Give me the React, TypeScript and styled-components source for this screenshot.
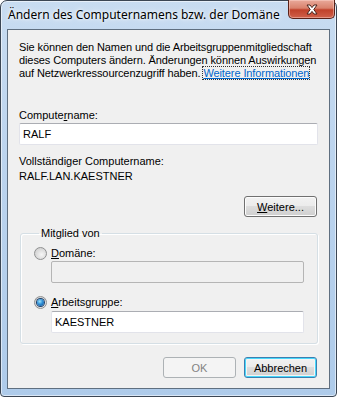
import React from 'react';
import styled, { createGlobalStyle } from 'styled-components';

const GlobalStyle = createGlobalStyle`
  html, body {
    margin: 0;
    padding: 0;
    background: #ffffff;
    overflow: hidden;
  }
  * {
    box-sizing: border-box;
  }
`;

const Window = styled.div`
  width: 337px;
  height: 397px;
  display: flex;
  flex-direction: column;
  border: 1px solid #3b4654;
  border-radius: 7px 7px 4px 4px;
  background: linear-gradient(to bottom, #c8dcf1 0%, #bcd4ee 40%, #aecbea 100%);
  box-shadow: inset 0 0 0 1px rgba(255, 255, 255, 0.55);
  padding: 0 6px 7px 6px;
  font-family: 'Liberation Sans', Arial, sans-serif;
  font-size: 11px;
  color: #000;
`;

const TitleBar = styled.div`
  height: 28px;
  display: flex;
  align-items: flex-start;
  justify-content: space-between;
  margin-right: -5px;
`;

const TitleText = styled.div`
  font-family: 'Noto Sans', 'Open Sans', sans-serif;
  font-size: 12px;
  line-height: 16px;
  padding-top: 6px;
  padding-left: 1px;
  color: #000;
  text-shadow: 0 0 6px #ffffff, 0 0 3px #ffffff;
`;

const CloseButton = styled.div`
  width: 47px;
  height: 19px;
  margin-top: -1px;
  border: 1px solid #5a2118;
  border-top: none;
  border-radius: 0 0 5px 5px;
  background: linear-gradient(to bottom, #e9a99a 0%, #d9826d 45%, #c0412a 55%, #d0604a 100%);
  box-shadow: inset 0 0 0 1px rgba(255, 220, 210, 0.45);
  display: flex;
  align-items: center;
  justify-content: center;
`;

const Panel = styled.div`
  flex: 1;
  background: #f0f0f0;
  border: 1px solid #5f6f80;
  padding: 11px 11px 0 11px;
  display: flex;
  flex-direction: column;
`;

const Description = styled.p`
  margin: 0;
  line-height: 13px;
  white-space: nowrap;
  letter-spacing: -0.1px;
`;

const InfoLink = styled.a`
  color: #0066cc;
  text-decoration: underline;
  outline: 1px dotted #333;
  outline-offset: 0;
  cursor: pointer;
`;

const Label = styled.div<{ $top?: number }>`
  line-height: 13px;
  margin-top: ${(p) => p.$top ?? 0}px;
`;

const Key = styled.span`
  text-decoration: underline;
`;

const TextBox = styled.div<{ $disabled?: boolean; $top?: number; $indent?: number }>`
  height: 22px;
  margin-top: ${(p) => p.$top ?? 0}px;
  margin-left: ${(p) => p.$indent ?? 0}px;
  border: 1px solid #e2e3ea;
  border-top-color: #abadb3;
  border-radius: 2px;
  background: ${(p) => (p.$disabled ? '#f0f0f0' : '#ffffff')};
  ${(p) => (p.$disabled ? 'border-color: #b5b5b5; border-top-color: #b5b5b5;' : '')}
  padding: 0 3px;
  line-height: 20px;
`;

const ButtonRow = styled.div<{ $top: number }>`
  display: flex;
  justify-content: flex-end;
  gap: 8px;
  margin-top: ${(p) => p.$top}px;
  padding-right: 1px;
`;

const Button = styled.div<{ $disabled?: boolean; $default?: boolean }>`
  width: 73px;
  height: 21px;
  border-radius: 3px;
  display: flex;
  align-items: center;
  justify-content: center;
  border: 1px solid ${(p) => (p.$disabled ? '#adb2b5' : p.$default ? '#3c7fb1' : '#707070')};
  color: ${(p) => (p.$disabled ? '#838383' : '#000')};
  background: ${(p) =>
    p.$disabled
      ? '#f4f4f4'
      : 'linear-gradient(to bottom, #f2f2f2 0%, #ebebeb 49%, #dddddd 50%, #cfcfcf 100%)'};
  box-shadow: ${(p) =>
    p.$disabled
      ? 'none'
      : p.$default
      ? 'inset 0 0 0 1px #48d8fb, inset 0 0 0 2px #f4f4f4'
      : 'inset 0 0 0 1px #fcfcfc'};
`;

const GroupBox = styled.fieldset`
  margin: 10px 0 0 1px;
  padding: 0 13px 10px 13px;
  border: 1px solid #d5dfe5;
  border-radius: 3px;
  box-shadow: inset 1px 1px 0 #ffffff, 1px 1px 0 #ffffff;
  min-width: 0;
`;

const Legend = styled.legend`
  padding: 0 2px;
  margin-left: 5px;
  line-height: 13px;
`;

const RadioRow = styled.div<{ $top: number }>`
  display: flex;
  align-items: center;
  gap: 4px;
  margin-top: ${(p) => p.$top}px;
  line-height: 13px;
`;

const Radio = styled.span<{ $checked?: boolean }>`
  width: 13px;
  height: 13px;
  border-radius: 50%;
  border: 1px solid #8f9091;
  background: radial-gradient(circle at 60% 60%, #f6f6f6 0%, #d9d9d9 60%, #c8c8c8 100%);
  display: flex;
  align-items: center;
  justify-content: center;
  flex-shrink: 0;

  &::after {
    content: '';
    display: ${(p) => (p.$checked ? 'block' : 'none')};
    width: 7px;
    height: 7px;
    border-radius: 50%;
    background: radial-gradient(circle at 40% 35%, #9ee3fb 0%, #2f8fd6 45%, #0f4c8e 100%);
    box-shadow: 0 0 0 1px #1d3f6a;
  }
`;

function CloseGlyph() {
  return (
    <svg width="14" height="11" viewBox="0 0 14 11">
      <path
        d="M2 1 L5 1 L7 3.6 L9 1 L12 1 L8.8 5.5 L12 10 L9 10 L7 7.4 L5 10 L2 10 L5.2 5.5 Z"
        fill="#ffffff"
        stroke="#4a231b"
        strokeWidth="1"
        strokeLinejoin="round"
      />
    </svg>
  );
}

const App = () => {
  return (
    <>
      <GlobalStyle />
      <Window>
        <TitleBar>
          <TitleText>Ändern des Computernamens bzw. der Domäne</TitleText>
          <CloseButton>
            <CloseGlyph />
          </CloseButton>
        </TitleBar>
        <Panel>
          <Description>
            Sie können den Namen und die Arbeitsgruppenmitgliedschaft
            <br />
            dieses Computers ändern. Änderungen können Auswirkungen
            <br />
            auf Netzwerkressourcenzugriff haben. <InfoLink>Weitere Informationen</InfoLink>
          </Description>

          <Label $top={29}>
            Compute<Key>r</Key>name:
          </Label>
          <TextBox $top={1}>RALF</TextBox>

          <Label $top={10}>Vollständiger Computername:</Label>
          <Label $top={2}>RALF.LAN.KAESTNER</Label>

          <ButtonRow $top={13}>
            <Button>
              <span>
                <Key>W</Key>eitere...
              </span>
            </Button>
          </ButtonRow>

          <GroupBox>
            <Legend>Mitglied von</Legend>
            <RadioRow $top={7}>
              <Radio />
              <span>
                <Key>D</Key>omäne:
              </span>
            </RadioRow>
            <TextBox $disabled $top={1} $indent={17} />
            <RadioRow $top={13}>
              <Radio $checked />
              <span>
                <Key>A</Key>rbeitsgruppe:
              </span>
            </RadioRow>
            <TextBox $top={2} $indent={17}>
              KAESTNER
            </TextBox>
          </GroupBox>

          <ButtonRow $top={13}>
            <Button $disabled>OK</Button>
            <Button $default>Abbrechen</Button>
          </ButtonRow>
        </Panel>
      </Window>
    </>
  );
};

export default App;
